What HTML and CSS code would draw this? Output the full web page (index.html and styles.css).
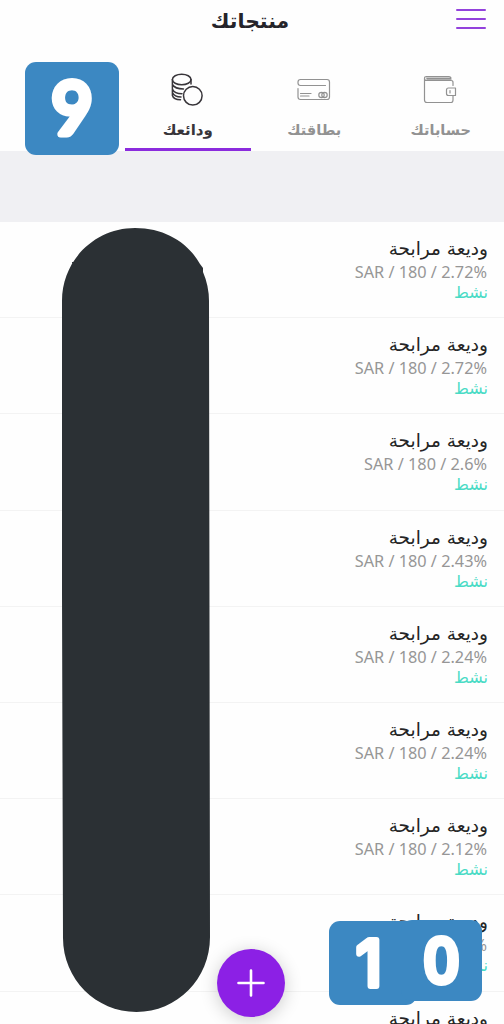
FILE: index.html
```html
<!DOCTYPE html>
<html lang="ar" dir="rtl">
<head>
<meta charset="utf-8">
<title>منتجاتك</title>
<link rel="stylesheet" href="styles.css">
</head>
<body>
<main class="app">
  <header class="header">
    <div class="menu"><i></i><i></i><i></i></div>
    <h1 class="heading"><span>منتجاتك</span></h1>
  </header>
  <nav class="tabs">
    <a class="tab">
      <svg class="icon" width="36" height="36" viewBox="0 0 36 36"><path d="M30 13.500V10.500Q30 8.500 28 8.500H3.500Q1.500 8.500 1.500 6.500Q1.500 4.500 3.500 4.500H26Q27.500 4.500 28 6M1.500 6.500V28Q1.500 30.500 4 30.500H28Q30 30.500 30 28V23.500M3.500 6H27.500M4 7.200H28M25.500 16H32.500V23.500H25.500Q23.500 23.500 23.500 21.500V18Q23.500 16 25.500 16M27 18.500V21"/></svg>
      <span class="label">حساباتك</span>
    </a>
    <a class="tab">
      <svg class="icon" width="36" height="36" viewBox="0 0 36 36"><path d="M29.500 13.500H4.500Q2 13.500 2 11V10Q2 7.500 4.500 7.500H31Q33.500 7.500 33.500 10V25Q33.500 27.500 31 27.500H4.500Q2 27.500 2 25V16.500M4.500 21.500H15M4.500 24H13"/><circle cx="25.500" cy="23" r="2.700"/><circle cx="28.500" cy="23" r="2.700"/></svg>
      <span class="label">بطاقتك</span>
    </a>
    <a class="tab active">
      <svg class="icon" width="36" height="36" viewBox="1 0 36 36"><ellipse cx="12.700" cy="7.500" rx="9.300" ry="5.300"/><path d="M3.400 7.500V23.500Q4.500 27.500 11.500 27.800M22 7.500V12M3.400 12.500Q6 17 14.500 17M3.400 17Q5.500 21.800 13 21.800M3.400 20.500Q5.500 25 12 25"/><circle cx="23.800" cy="23.800" r="9.300"/></svg>
      <span class="label">ودائعك</span>
    </a>
    <div class="tab spacer"></div>
  </nav>
  <div class="band"></div>
  <section class="list">
    <article class="row"><h2><span>وديعة مرابحة</span></h2><p class="rate" dir="ltr">SAR / 180 / 2.72%</p><p class="status"><span>نشط</span></p></article>
    <article class="row"><h2><span>وديعة مرابحة</span></h2><p class="rate" dir="ltr">SAR / 180 / 2.72%</p><p class="status"><span>نشط</span></p></article>
    <article class="row"><h2><span>وديعة مرابحة</span></h2><p class="rate" dir="ltr">SAR / 180 / 2.6%</p><p class="status"><span>نشط</span></p></article>
    <article class="row"><h2><span>وديعة مرابحة</span></h2><p class="rate" dir="ltr">SAR / 180 / 2.43%</p><p class="status"><span>نشط</span></p></article>
    <article class="row"><h2><span>وديعة مرابحة</span></h2><p class="rate" dir="ltr">SAR / 180 / 2.24%</p><p class="status"><span>نشط</span></p></article>
    <article class="row"><h2><span>وديعة مرابحة</span></h2><p class="rate" dir="ltr">SAR / 180 / 2.24%</p><p class="status"><span>نشط</span></p></article>
    <article class="row"><h2><span>وديعة مرابحة</span></h2><p class="rate" dir="ltr">SAR / 180 / 2.12%</p><p class="status"><span>نشط</span></p></article>
    <article class="row"><h2><span>وديعة مرابحة</span></h2><p class="rate" dir="ltr">%</p><p class="status"><span>نشط</span></p></article>
    <article class="row"><h2><span>وديعة مرابحة</span></h2></article>
  </section>
  <svg class="cover" width="150" height="786" viewBox="0 0 150 786"><path d="M1 74C1 33 34 1 74 1C105 1 128 17 139 37L142 41V45Q148 59 148 74L149 710C149 752 116 785 75.500 785C35 785 2 752 2 711L1 365V74ZM11 35H16L12 45Z"/></svg>
  <button class="add" aria-label="+"><svg width="28" height="28" viewBox="0 0 28 28"><path d="M14 1.500V26.500M1.500 14H26.500"/></svg></button>
  <svg class="badge nine" viewBox="0 0 94 93"><text x="47" y="71.500">9</text></svg>
  <svg class="badge one" viewBox="0 0 88 84"><text x="40" y="64.500">1</text></svg>
  <svg class="badge zero" viewBox="0 0 81 81"><text x="40.500" y="62">0</text></svg>
</main>
</body>
</html>
```

FILE: styles.css
```css
* { box-sizing: border-box; }
body { margin: 0; background: #fefefe; font-family: "DejaVu Sans", sans-serif; }
h1, h2, p { margin: 0; }
.app { position: relative; width: 504px; height: 1024px; overflow: hidden; }
.header { display: grid; grid-template-columns: 60px 1fr 56px; height: 62px; }
.menu { display: flex; flex-direction: column; gap: 7px; padding: 9px 18px 0 0; }
.menu i { width: 30px; height: 2px; border-radius: 1px; background: #9342dc; }
.heading { display: flex; justify-content: center; padding-top: 6px; font-size: 20.400px; line-height: 30px; color: #25242a; }
.tabs { display: flex; height: 89px; }
.tab { display: flex; flex: 0 0 126.500px; flex-direction: column; align-items: center; padding-top: 10px; color: #929292; border-bottom: 3px solid transparent; height: 89px; }
.tab.active { color: #38353a; border-color: #8b2bdd; height: 88.500px; }
.icon { fill: none; stroke: currentColor; stroke-width: 1.200; stroke-linejoin: round; stroke-linecap: round; }
.active .icon { stroke-width: 1.500; }
.label { margin-top: 10px; font-size: 14.500px; font-weight: bold; line-height: 24px; }
.active .label { font-size: 15px; }
.spacer { flex: 1; }
.band { height: 71px; background: #f0f0f3; }
.row { height: 96.200px; padding: 14px 16px 0; border-bottom: 1px solid #f3f3f3; }
.row h2 { height: 26px; font-size: 18.500px; font-weight: normal; line-height: 26px; color: #252525; }
.row h2 span, .status span, .heading span, .label { white-space: nowrap; }
.rate { height: 20px; padding-right: 1px; font: 16.300px/20px "Noto Sans", sans-serif; color: #969696; text-align: right; }
.status { height: 20px; font-size: 16px; line-height: 21px; color: #4adbc5; }
.cover { position: absolute; left: 61px; top: 227px; fill: #2b3034; }
.add { position: absolute; left: 217px; top: 949px; display: grid; place-items: center; width: 68px; height: 68px; padding: 0; border: 0; border-radius: 50%; background: #8c20e5; box-shadow: 0 3px 18px #0003; }
.add svg { fill: none; stroke: #fff; stroke-width: 2.600; stroke-linecap: round; }
.badge { position: absolute; border-radius: 11px; background: #3c88c2; direction: ltr; }
.badge text { fill: #fff; stroke: #fff; stroke-linejoin: round; text-anchor: middle; }
.nine { left: 25px; top: 62px; width: 94px; height: 93px; font: 400 71px Lato, sans-serif; stroke-width: 7px; }
.one { left: 329px; top: 921px; width: 88px; height: 84px; font: 400 63px Inter, sans-serif; stroke-width: 6px; }
.zero { left: 401px; top: 920px; width: 81px; height: 81px; font: 400 60px "Open Sans", sans-serif; stroke-width: 7px; }
```
